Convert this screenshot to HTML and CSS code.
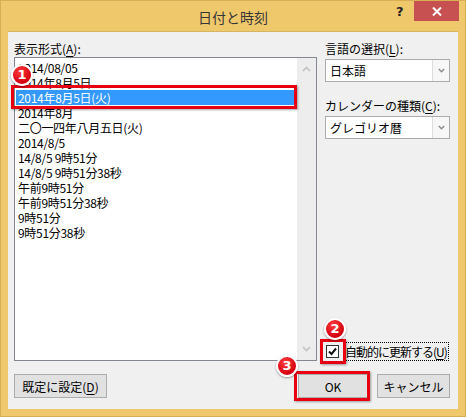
FILE: index.html
```html
<!DOCTYPE html>
<html lang="ja">
<head>
    <meta charset="UTF-8">
    <title>日付と時刻</title>
    <link rel="stylesheet" href="styles.css">
</head>
<body>
    <div class="window">
        <div class="titlebar">
            <span class="title">日付と時刻</span>
            <span class="help">?</span>
            <span class="close">
                <svg width="10" height="9" viewBox="0 0 10 9"><path d="M1 0.5 L9 8.5 M9 0.5 L1 8.5" stroke="#fff" stroke-width="2"/></svg>
            </span>
        </div>

        <div class="client">
            <div class="main">
                <div class="format-col">
                    <div class="field-label">表示形式(<u>A</u>):</div>
                    <div class="listbox">
                        <ul class="items">
                            <li>2014/08/05</li>
                            <li>2014年8月5日</li>
                            <li class="selected">2014年8月5日(火)</li>
                            <li>2014年8月</li>
                            <li>二〇一四年八月五日(火)</li>
                            <li>2014/8/5</li>
                            <li>14/8/5 9時51分</li>
                            <li>14/8/5 9時51分38秒</li>
                            <li>午前9時51分</li>
                            <li>午前9時51分38秒</li>
                            <li>9時51分</li>
                            <li>9時51分38秒</li>
                        </ul>
                        <div class="scrollbar">
                            <svg width="9" height="6" viewBox="0 0 9 6"><path d="M1 5 L4.5 1.5 L8 5" fill="none" stroke="#c2c2c2" stroke-width="1.6"/></svg>
                            <svg width="9" height="6" viewBox="0 0 9 6"><path d="M1 1 L4.5 4.5 L8 1" fill="none" stroke="#c2c2c2" stroke-width="1.6"/></svg>
                        </div>
                    </div>
                </div>

                <div class="side-col">
                    <div class="field-label">言語の選択(<u>L</u>):</div>
                    <div class="combo">
                        <span class="combo-text">日本語</span>
                        <span class="combo-btn">
                            <svg width="7" height="5" viewBox="0 0 7 5"><path d="M0.8 1 L3.5 3.8 L6.2 1" fill="none" stroke="#8a8a8a" stroke-width="1.4"/></svg>
                        </span>
                    </div>
                    <div class="field-label second">カレンダーの種類(<u>C</u>):</div>
                    <div class="combo">
                        <span class="combo-text">グレゴリオ暦</span>
                        <span class="combo-btn">
                            <svg width="7" height="5" viewBox="0 0 7 5"><path d="M0.8 1 L3.5 3.8 L6.2 1" fill="none" stroke="#8a8a8a" stroke-width="1.4"/></svg>
                        </span>
                    </div>

                    <div class="auto-update">
                        <span class="checkbox">
                            <svg width="11" height="11" viewBox="0 0 11 11"><path d="M2 5.5 L4.5 8 L9 2.5" fill="none" stroke="#111" stroke-width="2"/></svg>
                        </span>
                        <span class="focus-text">自動的に更新する(<u>U</u>)</span>
                    </div>
                </div>
            </div>

            <div class="footer">
                <button class="btn wide">既定に設定(<u>D</u>)</button>
                <div class="footer-right">
                    <button class="btn ok">OK</button>
                    <button class="btn">キャンセル</button>
                </div>
            </div>
        </div>

        <span class="badge badge-1">1</span>
        <span class="badge badge-2">2</span>
        <span class="badge badge-3">3</span>
    </div>
</body>
</html>
```

FILE: styles.css
```css
body {
    margin: 0;
    font-family: "Noto Sans CJK JP", "Noto Sans", sans-serif;
    font-size: 12px;
    color: #000;
}

.window {
    position: relative;
    width: 466px;
    height: 417px;
    box-sizing: border-box;
    background: #f0c86c;
    border: 1px solid #d8ae55;
    display: flex;
    flex-direction: column;
}

.titlebar {
    height: 30px;
    position: relative;
    display: flex;
    justify-content: center;
    align-items: center;
}

.title {
    font-size: 14px;
    color: #363636;
    margin-top: 1px;
}

.help {
    position: absolute;
    left: 395px;
    top: 3px;
    font-family: "DejaVu Sans", sans-serif;
    font-weight: bold;
    font-size: 13px;
    color: #222;
}

.close {
    position: absolute;
    left: 413px;
    top: 0;
    width: 45px;
    height: 20px;
    background: #c75050;
    display: flex;
    justify-content: center;
    align-items: center;
}

.client {
    flex: 1;
    margin: 0 7px 7px 7px;
    background: #f0f0f0;
    border-top: 1px solid #d6b464;
    padding: 8px 8px 0 6px;
    display: flex;
    flex-direction: column;
}

.main {
    display: grid;
    grid-template-columns: 303px 125px;
    column-gap: 8px;
}

.field-label {
    height: 17px;
    line-height: 17px;
    white-space: nowrap;
}

.field-label u,
.focus-text u,
.btn u {
    text-underline-offset: 2px;
}

.listbox {
    height: 304px;
    box-sizing: border-box;
    border: 1px solid #828790;
    background: #fff;
    display: flex;
}

.items {
    list-style: none;
    margin: 0;
    padding: 2px 0 0 1px;
    flex: 1;
    letter-spacing: -0.3px;
}

.items li {
    height: 15px;
    line-height: 15px;
    padding-left: 2px;
    white-space: nowrap;
}

.items li.selected {
    background: #3399ff;
    color: #fff;
    position: relative;
}

.items li.selected::after {
    content: "";
    position: absolute;
    left: -5px;
    top: -5px;
    right: 0;
    bottom: -4px;
    border: 3px solid #e60012;
    box-shadow: 1px 1px 2px rgba(0, 0, 0, 0.35);
}

.scrollbar {
    width: 19px;
    background: #ededed;
    display: flex;
    flex-direction: column;
    justify-content: space-between;
    align-items: center;
    padding: 8px 0 8px;
}

.side-col {
    display: flex;
    flex-direction: column;
}

.combo {
    height: 23px;
    margin-top: 2px;
    box-sizing: border-box;
    border: 1px solid #acacac;
    background: #fff;
    display: flex;
}

.combo-text {
    flex: 1;
    padding-left: 4px;
    line-height: 21px;
}

.combo-btn {
    width: 16px;
    border-left: 1px solid #dcdcdc;
    background: #f7f7f7;
    display: flex;
    justify-content: center;
    align-items: center;
}

.field-label.second {
    margin-top: 15px;
}

.auto-update {
    margin-top: auto;
    display: flex;
    align-items: center;
    height: 20px;
    white-space: nowrap;
}

.checkbox {
    flex: none;
    width: 13px;
    height: 13px;
    box-sizing: border-box;
    border: 1px solid #333;
    background: #fff;
    display: flex;
    justify-content: center;
    align-items: center;
    margin-left: 1px;
    position: relative;
}

.checkbox::after {
    content: "";
    position: absolute;
    left: -7px;
    top: -7px;
    width: 20px;
    height: 19px;
    border: 3px solid #e60012;
    box-shadow: 1px 1px 2px rgba(0, 0, 0, 0.35);
}

.focus-text {
    margin-left: 5px;
    padding: 0 1px;
    line-height: 17px;
    letter-spacing: -1px;
    outline: 1px dotted #000;
}

.footer {
    margin-top: 13px;
    display: flex;
    justify-content: space-between;
}

.footer-right {
    display: flex;
    gap: 9px;
}

.btn {
    font-family: inherit;
    font-size: 12px;
    height: 24px;
    width: 73px;
    padding: 0;
    background: #e1e1e1;
    border: 1px solid #adadad;
    color: #000;
}

.btn.wide {
    width: 93px;
}

.btn.ok {
    width: 70px;
    position: relative;
}

.btn.ok::after {
    content: "";
    position: absolute;
    left: -5px;
    top: -4px;
    right: -3px;
    bottom: -4px;
    border: 3px solid #e60012;
    box-shadow: 1px 1px 2px rgba(0, 0, 0, 0.35);
}

.badge {
    position: absolute;
    width: 18px;
    height: 18px;
    border-radius: 50%;
    border: 2px solid #fff;
    background: radial-gradient(circle at 40% 30%, #ff3b3b, #d4000f 70%);
    box-shadow: 0 1px 2px rgba(0, 0, 0, 0.4);
    color: #fff;
    font-family: "DejaVu Sans", sans-serif;
    font-weight: bold;
    font-size: 13px;
    line-height: 18px;
    text-align: center;
}

.badge-1 {
    left: 10px;
    top: 63px;
}

.badge-2 {
    left: 323px;
    top: 317px;
}

.badge-3 {
    left: 275px;
    top: 354px;
}
```
